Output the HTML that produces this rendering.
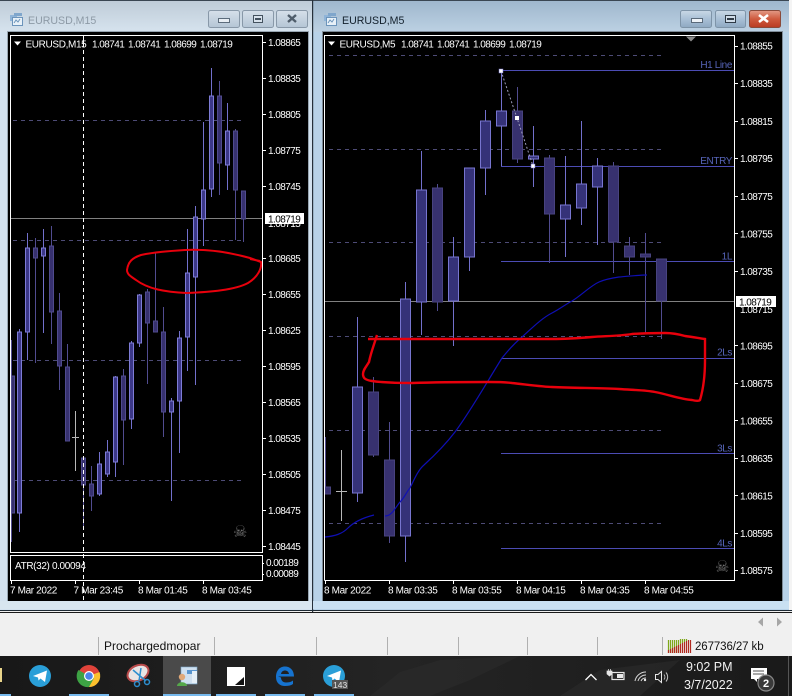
<!DOCTYPE html>
<html><head><meta charset="utf-8"><style>
html,body{margin:0;padding:0;background:#f0f0f0;width:792px;height:696px;overflow:hidden}
svg{display:block;font-family:"Liberation Sans",sans-serif}
.p{font-size:10px;fill:#fff;letter-spacing:-.56px}
.d{font-size:10px;fill:#fff;letter-spacing:-.36px}
</style></head><body>
<svg width="792" height="696" viewBox="0 0 792 696" xmlns="http://www.w3.org/2000/svg">
<defs>
<linearGradient id="t1" x1="0" y1="0" x2="0" y2="1"><stop offset="0" stop-color="#bfccd8"/><stop offset="1" stop-color="#d6e3ee"/></linearGradient>
<linearGradient id="t2" x1="0" y1="0" x2="0" y2="1"><stop offset="0" stop-color="#9fb7cd"/><stop offset="1" stop-color="#bcd1e3"/></linearGradient>
<linearGradient id="b1" x1="0" y1="0" x2="0" y2="1"><stop offset="0" stop-color="#d6e0ea"/><stop offset="1" stop-color="#b4c5d5"/></linearGradient>
<linearGradient id="b2" x1="0" y1="0" x2="0" y2="1"><stop offset="0" stop-color="#c9d8e6"/><stop offset=".5" stop-color="#a9c0d6"/><stop offset="1" stop-color="#8fa9c2"/></linearGradient>
<linearGradient id="rb" x1="0" y1="0" x2="0" y2="1"><stop offset="0" stop-color="#e39a86"/><stop offset=".5" stop-color="#cf5a3e"/><stop offset="1" stop-color="#b83a22"/></linearGradient>
<linearGradient id="tb" x1="0" y1="0" x2="1" y2="0"><stop offset="0" stop-color="#181818"/><stop offset=".5" stop-color="#242424"/><stop offset="1" stop-color="#1a1a1a"/></linearGradient>
<clipPath id="cl"><rect x="11" y="36" width="251" height="517"/></clipPath>
<clipPath id="cr"><rect x="325" y="36" width="409" height="544"/></clipPath>
</defs>
<rect width="792" height="696" fill="#f0f0f0"/>

<!-- left window -->
<rect x="0" y="0" width="312" height="610" fill="#d3e2ef"/>
<rect x="0" y="1" width="312" height="31" fill="url(#t1)"/>
<rect x="0" y="0" width="312" height="1" fill="#3a4652"/>
<rect x="7" y="31" width="302" height="571" fill="#98a6b2"/>
<rect x="8" y="32" width="300" height="569" fill="#000"/>
<g>
<rect x="10" y="15" width="7" height="6" fill="#8fb4d8"/><rect x="14" y="13" width="8" height="3" fill="#7fa6cc"/><rect x="12.500" y="17.500" width="10" height="8" fill="#e8f1f8" stroke="#6c94bb"/>
<path d="M14 23l2-3 2 2 2-3" stroke="#6c94bb" fill="none"/>
</g>
<text x="28" y="24" font-size="10.600" fill="#8d9aa6">EURUSD,M15</text>
<rect x="208.500" y="10.500" width="31" height="17" rx="2" fill="url(#b1)" stroke="#8898a8"/>
<rect x="242.500" y="10.500" width="31" height="17" rx="2" fill="url(#b1)" stroke="#8898a8"/>
<rect x="276.500" y="10.500" width="31" height="17" rx="2" fill="url(#b1)" stroke="#8898a8"/>
<rect x="218.500" y="18.500" width="11" height="4" fill="#e8eef4" stroke="#5c6c7c"/>
<rect x="253.500" y="15.500" width="9" height="7" fill="#d8e2ec" stroke="#44525f"/><rect x="255" y="18" width="6" height="2" fill="#44525f"/>
<path d="M288 15l8 7m0-7l-8 7" stroke="#4f5d6b" stroke-width="2.400"/>

<!-- right window -->
<rect x="313" y="0" width="476" height="610" fill="#b8d2e8"/>
<rect x="313" y="1" width="476" height="31" fill="url(#t2)"/>
<rect x="313" y="0" width="476" height="1" fill="#3a4652"/>
<rect x="789" y="0" width="3" height="610" fill="#f4f4f4"/>
<rect x="312" y="0" width="1.200" height="612" fill="#26303a"/>
<rect x="322" y="31" width="461" height="571" fill="#7f8c98"/>
<rect x="323" y="32" width="459" height="569" fill="#000"/>
<rect x="313" y="601" width="476" height="8" fill="#c9e0f2"/>
<rect x="0" y="601" width="312" height="8" fill="#d8e6f0"/>
<g>
<rect x="324" y="15" width="7" height="6" fill="#8fb4d8"/><rect x="328" y="13" width="8" height="3" fill="#7fa6cc"/><rect x="326.500" y="17.500" width="10" height="8" fill="#e8f1f8" stroke="#6c94bb"/>
<path d="M328 23l2-3 2 2 2-3" stroke="#6c94bb" fill="none"/>
</g>
<text x="342" y="24" font-size="10.600" fill="#13202c">EURUSD,M5</text>
<rect x="680.500" y="10.500" width="31" height="17" rx="2" fill="url(#b2)" stroke="#7e94a8"/>
<rect x="715.500" y="10.500" width="30" height="17" rx="2" fill="url(#b2)" stroke="#7e94a8"/>
<rect x="749.500" y="10.500" width="31" height="17" rx="2" fill="url(#rb)" stroke="#8a4a3a"/>
<rect x="691.500" y="18.500" width="11" height="4" fill="#eef3f8" stroke="#5a6a7a"/>
<rect x="725.500" y="15.500" width="10" height="7" fill="#cfdce8" stroke="#2e3a46"/><rect x="727" y="18" width="7" height="2" fill="#2e3a46"/>
<path d="M759 15l9 7m0-7l-9 7" stroke="#fff" stroke-width="2.600"/>

<!-- lower chrome -->
<rect x="0" y="610" width="792" height="1" fill="#1e2a34"/>
<rect x="0" y="612" width="792" height="1" fill="#1a1a1a"/>
<rect x="0" y="613" width="792" height="43" fill="#f0f0f0"/>
<path d="M762 622l5-4.500v9zM781 617.500l5 4.500-5 4.500z" fill="#a6a6a6" transform="translate(-4 0)"/>
<path d="M98.500 637V655M214.500 637V655M316.500 637V655M387.500 637V655M458.500 637V655M527.500 637V655M597.500 637V655M662.500 637V655" stroke="#b0b0b0"/>
<text x="104" y="650" font-size="12" fill="#111" letter-spacing=".03">Prochargedmopar</text>
<g stroke-width="1.200">
<path d="M668.500 640V653M670.500 640V653M672.500 640V653M674.500 640V653M676.500 640V653M678.500 640V653" stroke="#7ea71a"/>
<path d="M668.500 650V653M670.500 649V653M672.500 648V653M674.500 647V653M676.500 646V653M678.500 645V653M680.500 644V653M682.500 643V653M684.500 642V653M686.500 641V653M688.500 640V653M690.500 640V653" stroke="#b02a20"/>
<path d="M680.500 639V644M682.500 639V643M684.500 639V642M686.500 639V641" stroke="#7ea71a"/>
</g>
<text x="695" y="650" font-size="11.500" fill="#111" letter-spacing="-.1">267736/27 kb</text>

<!-- left chart -->
<g clip-path="url(#cl)">
<path d="M13 120.500H245M13 240.500H245M13 360.500H245M13 480.500H245" stroke="#4d4b76" stroke-dasharray="4 4"/>
<path d="M11 218.500H262" stroke="#808080"/>
<path fill="none" stroke="#514c90" d="M11.500 340V542M35.500 238V363M51.500 226V344M59.500 293V390M67.500 344V441M83.500 458V530M91.500 466V511M123.500 369V465M147.500 289V384M155.500 253V332M163.500 307V437M219.500 81V195M235.500 129V240M243.500 191V242"/>
<path fill="#37316f" stroke="#504b8e" d="M11.500 376H14.500V513H11.500ZM33.500 248H37.500V258H33.500ZM49.500 246H53.500V312H49.500ZM57.500 311H61.500V366H57.500ZM65.500 367H69.500V441H65.500ZM81.500 458H85.500V485H81.500ZM89.500 484H93.500V496H89.500ZM121.500 376H125.500V420H121.500ZM145.500 292H149.500V323H145.500ZM153.500 321H157.500V332H153.500ZM161.500 332H165.500V412H161.500ZM217.500 96H221.500V163H217.500ZM233.500 131H237.500V190H233.500ZM241.500 191H245.500V219H241.500Z"/>
<path fill="none" stroke="#7270cc" d="M19.500 329V532M27.500 233V360M43.500 229V333M99.500 452V496M107.500 440V477M115.500 376V477M131.500 341V429M139.500 294V347M171.500 398V501M179.500 331V453M187.500 229V371M195.500 206V385M203.500 122V246M211.500 68V197M227.500 103V190"/>
<path fill="#3c3888" stroke="#7e7cd6" d="M17.500 332H21.500V513H17.500ZM25.500 248H29.500V332H25.500ZM41.500 248H45.500V256H41.500ZM97.500 464H101.500V494H97.500ZM105.500 452H109.500V474H105.500ZM113.500 377H117.500V462H113.500ZM129.500 343H133.500V419H129.500ZM137.500 295H141.500V343H137.500ZM169.500 401H173.500V412H169.500ZM177.500 338H181.500V401H177.500ZM185.500 273H189.500V337H185.500ZM193.500 217H197.500V277H193.500ZM201.500 190H205.500V219H201.500ZM209.500 96H213.500V189H209.500ZM225.500 131H229.500V165H225.500Z"/>
<path d="M75.500 411V471M72 437.500H79" stroke="#b8b8b8" fill="none"/>
</g>
<path d="M83.500 36V600" stroke="#fff" stroke-dasharray="4 3"/>
<path d="M127 270C128 262 132 258 141 255C155 252 170 251 185 250C205 249 225 251 250 258L261 262C262 268 258 277 248 283C235 290 210 292 187 293C165 292 148 289 136 280C130 276 127 274 127 270Z M250 259L260 261" fill="none" stroke="#e8000c" stroke-width="2"/>
<rect x="10.500" y="35.500" width="252" height="517" fill="none" stroke="#fff"/>
<rect x="10.500" y="555.500" width="252" height="25" fill="none" stroke="#fff"/>
<path d="M14 41.500h7l-3.500 4z" fill="#fff"/>
<text class="d" x="25.500" y="47.500">EURUSD,M15</text>
<rect x="83" y="38" width="1" height="6" fill="#fff"/>
<g class="p">
<text class="p" x="92" y="47.500">1.08741</text><text class="p" x="128" y="47.500">1.08741</text><text class="p" x="164" y="47.500">1.08699</text><text class="p" x="200" y="47.500">1.08719</text>
<text class="p" x="268" y="46">1.08865</text><text class="p" x="268" y="82">1.08835</text><text class="p" x="268" y="118">1.08805</text><text class="p" x="268" y="154">1.08775</text><text class="p" x="268" y="190">1.08745</text><text class="p" x="268" y="227">1.08715</text><text class="p" x="268" y="262">1.08685</text><text class="p" x="268" y="298">1.08655</text><text class="p" x="268" y="334">1.08625</text><text class="p" x="268" y="370">1.08595</text><text class="p" x="268" y="406">1.08565</text><text class="p" x="268" y="442">1.08535</text><text class="p" x="268" y="478">1.08505</text><text class="p" x="268" y="514">1.08475</text><text class="p" x="268" y="550">1.08445</text>
<text class="p" x="266" y="566">0.00189</text><text class="p" x="266" y="577">0.00089</text>
</g>
<path d="M263 42.500h3M263 78.500h3M263 114.500h3M263 150.500h3M263 186.500h3M263 258.500h3M263 294.500h3M263 330.500h3M263 366.500h3M263 402.500h3M263 438.500h3M263 474.500h3M263 510.500h3M263 546.500h3M263 563.500h1M263 574.500h1" stroke="#fff"/>
<rect x="265" y="213" width="39" height="11" fill="#fff"/>
<text x="268" y="222.500" font-size="10" fill="#000" letter-spacing="-.56">1.08719</text>
<text class="d" x="15" y="569">ATR(32) 0.00094</text>
<path d="M11.500 580v4M75.500 580v4M139.500 580v4M203.500 580v4" stroke="#fff"/>
<text class="d" x="10" y="593.500">7 Mar 2022</text><text class="d" x="73.500" y="593.500">7 Mar 23:45</text><text class="d" x="138" y="593.500">8 Mar 01:45</text><text class="d" x="202" y="593.500">8 Mar 03:45</text>
<text x="233" y="537" font-size="16" fill="#707070" font-family="DejaVu Sans">☠</text>

<!-- right chart -->
<g clip-path="url(#cr)">
<path d="M329 55.500H662M329 149.500H662M329 242.500H662M329 336.500H662M329 430.500H662M329 523.500H662" stroke="#4d4b76" stroke-dasharray="4 4"/>
<path d="M325 301.500H734" stroke="#808080"/>
<path d="M501 70.500H734M501 166.500H734M501 261.500H734M501 358.500H734M501 453.500H734M501 548.500H734" stroke="#4c4cb4"/>
<path fill="none" stroke="#514c90" d="M325.500 437V487M373.500 377V457M389.500 422V543M437.500 184V311M517.500 87V163M549.500 155V263M613.500 162V273M629.500 237V275M645.500 233V333M661.500 259V339"/>
<path fill="#37316f" stroke="#48437f" d="M325 487H330.500V494H325ZM368.500 392H378.500V455H368.500ZM384.500 460H394.500V536H384.500ZM432.500 188H442.500V302H432.500ZM512.500 111H522.500V159H512.500ZM544.500 158H554.500V214H544.500ZM608.500 166H618.500V242H608.500ZM624.500 246H634.500V257H624.500ZM640.500 254H650.500V257H640.500ZM656.500 259H666.500V301H656.500Z"/>
<path fill="none" stroke="#7270cc" d="M357.500 317V502M405.500 282V562M421.500 151V335M453.500 237V346M469.500 168V271M485.500 110V195M501.500 71V166M533.500 126V187M565.500 156V257M581.500 121V225M597.500 158V245"/>
<path fill="#353278" stroke="#7775cf" d="M352.500 387H362.500V493H352.500ZM400.500 299H410.500V536H400.500ZM416.500 190H426.500V302H416.500ZM448.500 257H458.500V301H448.500ZM464.500 168H474.500V257H464.500ZM480.500 121H490.500V168H480.500ZM496.500 111H506.500V126H496.500ZM528.500 156H538.500V159H528.500ZM560.500 205H570.500V219H560.500ZM576.500 184H586.500V208H576.500ZM592.500 166H602.500V187H592.500Z"/>
<path d="M341.500 450V521M336 491.500H347" stroke="#b8b8b8" fill="none"/>
<path d="M325 537C335 536 342 534 348 528C354 522 362 518 374 515M385 516C392 516 395 508 400 502C405 497 407 491 410 488C414 480 418 470 424 465C435 455 445 445 455 432C470 412 487 382 502 358C510 348 516 342 522 337C532 328 542 318 552 313C560 309 566 304 572 301C582 295 590 286 599 282C606 279 612 278 619 277C630 276 640 275 647 275" fill="none" stroke="#0f0fb4" stroke-width="1.200"/>
<path d="M501 71L517 118L533 166" fill="none" stroke="#9a9ab8" stroke-dasharray="2 2"/>
<rect x="499" y="69" width="4" height="4" fill="#fff" stroke="#6d6bc4" stroke-width=".5"/>
<rect x="515" y="116" width="4" height="4" fill="#fff"/>
<rect x="531" y="164" width="4" height="4" fill="#fff" stroke="#6d6bc4" stroke-width=".5"/>
<path d="M377 335C374 345 371 352 369 362C366 367 363 370 363 374C363 378 365 380 372 381C385 383 400 383 412 383C440 382 465 382 489 382C497 382 505 382 512 383C530 385 545 387 552 387C575 388 600 388 619 389C632 390 645 390 655 392C670 395 680 399 692 400C696 401 699 401 700 400C703 390 705 375 705 360V339C698 338 693 337 685 336C678 334 672 333 665 333C655 333 645 333 632 334C620 336 605 336 592 337C580 338 565 339 552 339H368" fill="none" stroke="#e8000c" stroke-width="2.400"/>
</g>
<path d="M324.500 580.500V35.500H734.500V580.500H324.500" fill="none" stroke="#fff"/>
<path d="M686 36.500h10l-5 5z" fill="#8a8a8a"/>
<path d="M328 41.500h7l-3.500 4z" fill="#fff"/>
<text class="d" x="339.500" y="47.500">EURUSD,M5</text>
<text class="p" x="401" y="47.500">1.08741</text><text class="p" x="437" y="47.500">1.08741</text><text class="p" x="473" y="47.500">1.08699</text><text class="p" x="509" y="47.500">1.08719</text>
<g font-size="10" fill="#5664b8" letter-spacing="-.4">
<text x="732" y="68" text-anchor="end">H1 Line</text><text x="732" y="164" text-anchor="end">ENTRY</text><text x="732" y="259.500" text-anchor="end">1L</text><text x="732" y="355.500" text-anchor="end">2Ls</text><text x="732" y="451.500" text-anchor="end">3Ls</text><text x="732" y="546.500" text-anchor="end">4Ls</text>
</g>
<text class="p" x="740" y="49.500">1.08855</text><text class="p" x="740" y="87">1.08835</text><text class="p" x="740" y="125">1.08815</text><text class="p" x="740" y="162">1.08795</text><text class="p" x="740" y="200">1.08775</text><text class="p" x="740" y="237.500">1.08755</text><text class="p" x="740" y="275">1.08735</text><text class="p" x="740" y="313">1.08715</text><text class="p" x="740" y="349.500">1.08695</text><text class="p" x="740" y="387">1.08675</text><text class="p" x="740" y="424.500">1.08655</text><text class="p" x="740" y="462">1.08635</text><text class="p" x="740" y="499.500">1.08615</text><text class="p" x="740" y="537">1.08595</text><text class="p" x="740" y="574">1.08575</text>
<path d="M735 46.500h3M735 83.500h3M735 121.500h3M735 158.500h3M735 196.500h3M735 233.500h3M735 271.500h3M735 345.500h3M735 383.500h3M735 420.500h3M735 458.500h3M735 495.500h3M735 533.500h3M735 570.500h3" stroke="#fff"/>
<rect x="736" y="296" width="40" height="11" fill="#fff"/>
<text x="739" y="305.500" font-size="10" fill="#000" letter-spacing="-.56">1.08719</text>
<path d="M325.500 580v4M389.500 580v4M453.500 580v4M517.500 580v4M581.500 580v4M645.500 580v4" stroke="#fff"/>
<text class="d" x="324" y="593.500">8 Mar 2022</text><text class="d" x="388" y="593.500">8 Mar 03:35</text><text class="d" x="452" y="593.500">8 Mar 03:55</text><text class="d" x="516" y="593.500">8 Mar 04:15</text><text class="d" x="580" y="593.500">8 Mar 04:35</text><text class="d" x="644" y="593.500">8 Mar 04:55</text>
<text x="715" y="572" font-size="16" fill="#707070" font-family="DejaVu Sans">☠</text>

<!-- taskbar -->
<rect x="0" y="656" width="792" height="40" fill="url(#tb)"/>
<path d="M370 696L400 672L440 660L520 656L470 680L430 696ZM560 696L600 670L680 660L640 696Z" fill="#2c2c2c" opacity=".6"/>
<rect x="163" y="656" width="48" height="40" fill="#4a4a4a"/>
<path d="M0 694h11M69 694h40M163 694h48M216 694h40M265 694h40M314 694h40" stroke="#76b9ed" stroke-width="2" transform="translate(0 1)"/>
<rect x="0" y="668" width="2" height="14" fill="#e8d48a"/>
<!-- telegram -->
<circle cx="40" cy="676" r="11" fill="#2a9fd8"/>
<path d="M33 676L47 670.500L45 682L40.500 678.500L38.500 680.500L38 677.500Z" fill="#fff"/>
<!-- chrome -->
<circle cx="89" cy="676" r="11" fill="#e0433a"/>
<path d="M89 676L79.500 681.500A11 11 0 0 0 89 687A11 11 0 0 0 99.500 672Z" fill="#fbc02d"/>
<path d="M89 676L78.500 670A11 11 0 0 0 89 687L94 678Z" fill="#3da344"/>
<circle cx="89" cy="676" r="5" fill="#fff"/><circle cx="89" cy="676" r="3.800" fill="#4a84e8"/>
<!-- snipping -->
<ellipse cx="138" cy="673" rx="11" ry="7.500" transform="rotate(-25 138 673)" fill="#e8e4e4" stroke="#b84a4a" stroke-width="2"/>
<path d="M141 668L139 681M133 670L146 681" stroke="#2d8ecf" stroke-width="1.500"/>
<circle cx="137" cy="684" r="2.500" fill="none" stroke="#2d8ecf" stroke-width="1.500"/><circle cx="147" cy="682" r="2.500" fill="none" stroke="#2d8ecf" stroke-width="1.500"/>
<!-- mt4 -->
<rect x="181" y="667" width="16" height="17" fill="#cfe0f0" stroke="#7ea8cc" stroke-width=".6"/><rect x="187" y="670" width="10" height="4" fill="#5a96cf"/>
<rect x="192" y="671" width="5" height="12" fill="#e6f0f8"/>
<circle cx="182" cy="677" r="3.200" fill="#e0a878"/>
<path d="M177 686C177 681 187 681 187 686Z" fill="#55a84a"/>
<!-- white square -->
<rect x="227" y="667" width="18" height="19" fill="#fff"/>
<path d="M244 677V685H235Z" fill="#111"/>
<!-- edge -->
<path d="M278 676.500H294C294 670 290 666.500 285 666.500C279 666.500 276 671.500 276 677C276 683 280 686 285 686C288 686 291 685.500 293 684V680.500C291 682 288.500 682.500 286 682.500C283 682.500 281 680.500 281 677.500ZM281 674C281.500 671.500 283 670.500 285 670.500C287 670.500 288.500 671.500 289 674Z" fill="#1673cf" fill-rule="evenodd"/>
<!-- telegram 2 -->
<circle cx="334" cy="676" r="11" fill="#2a9fd8"/>
<path d="M327 676L341 670.500L339 682L334.500 678.500L332.500 680.500L332 677.500Z" fill="#fff"/>
<rect x="332" y="680" width="16" height="9" fill="#555"/>
<text x="333" y="688" font-size="8.500" fill="#e4e4e4">143</text>
<!-- tray -->
<path d="M585.500 680L591 674.500L596.500 680" fill="none" stroke="#fff" stroke-width="1.300"/>
<rect x="612" y="672.500" width="12" height="7" fill="none" stroke="#e8e8e8" stroke-width="1.200"/><rect x="617" y="674" width="6" height="4" fill="#e8e8e8"/>
<path d="M607 671h5v3l-2.500 2-2.500-2zM608.500 669v2M610.500 669v2" fill="#e8e8e8" stroke="#e8e8e8" stroke-width=".7"/>
<path d="M635 681A11 11 0 0 1 646 672M638 681A8 8 0 0 1 646 675M641 681A5 5 0 0 1 646 678" fill="none" stroke="#d8d8d8" stroke-width="1"/>
<circle cx="645" cy="680" r="1.200" fill="#e8e8e8"/>
<path d="M655.500 674.500h2.500l3.500-3v11l-3.500-3h-2.500z" fill="none" stroke="#e8e8e8"/>
<path d="M664 674.500a4 4 0 0 1 0 5M666 672.500a7 7 0 0 1 0 9" fill="none" stroke="#bdbdbd"/>
<text x="686" y="671" font-size="12.500" fill="#f2f2f2">9:02 PM</text>
<text x="684" y="689" font-size="12.500" fill="#f2f2f2">3/7/2022</text>
<rect x="751" y="668" width="16" height="11" fill="#fff"/><path d="M754 679l3 3v-3z" fill="#fff"/>
<path d="M753 671h11M753 674h11" stroke="#555"/>
<circle cx="766" cy="683" r="8" fill="#3a3a3a" stroke="#888" stroke-width="1.200"/>
<text x="763" y="687" font-size="11" font-weight="bold" fill="#fff">2</text>
<rect x="788" y="656" width="1" height="40" fill="#555"/>
</svg>
</body></html>
